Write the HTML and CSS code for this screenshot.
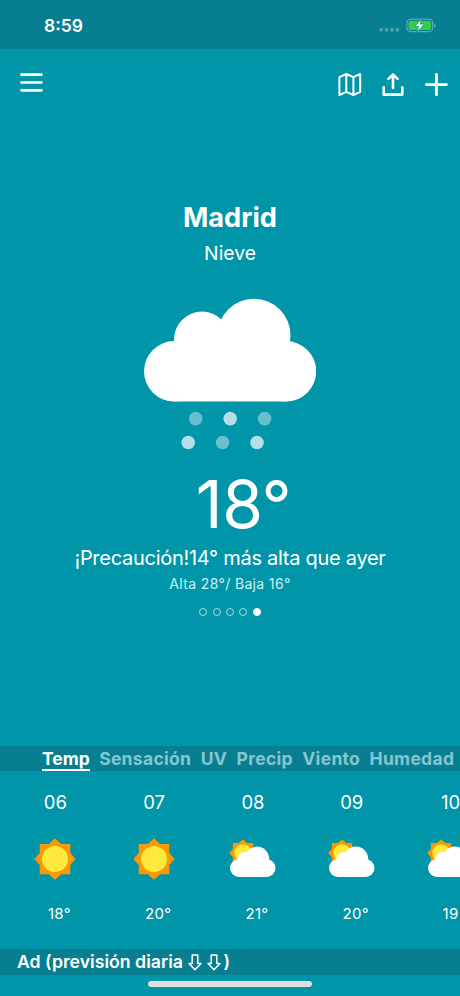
FILE: index.html
```
<!DOCTYPE html>
<html lang="es">
<head>
    <meta charset="UTF-8">
    <meta name="viewport" content="width=device-width, initial-scale=1.0">
    <title>Madrid</title>
    <link rel="stylesheet" href="styles.css">
</head>
<body>
    <svg class="defs" width="0" height="0">
        <symbol id="sun" viewBox="0 0 42 42">
            <path fill="#fc9803" d="M21 .3 27.2 6H36.3V15L41.7 21 36.3 27V36.3H27.2L21 41.7 14.8 36.3H5.7V27L.3 21 5.7 15V6H14.8z"/>
            <circle cx="21" cy="21" r="13" fill="#ffe93b"/>
        </symbol>
        <symbol id="partly" viewBox="0 0 47 39">
            <svg width="28" height="28" viewBox="0 0 42 42"><use href="#sun"/></svg>
            <g fill="#fff">
                <circle cx="10" cy="29" r="9"/>
                <circle cx="37.5" cy="29" r="9"/>
                <circle cx="16" cy="20.5" r="7.5"/>
                <circle cx="28" cy="19.8" r="12.2"/>
                <path d="M9 20H38V38H10z"/>
            </g>
        </symbol>
        <symbol id="down" viewBox="0 0 14 17">
            <path fill="none" stroke="#fff" stroke-width="1.5" stroke-linejoin="round" d="M4.2 1H9.8V9.6H13L7 15.8 1 9.6H4.2z"/>
        </symbol>
    </svg>

    <header class="status">
        <span class="time">8:59</span>
        <svg class="battery" width="58" height="16" viewBox="0 0 58 16">
            <g fill="#4fa3af">
                <rect x="1.5" y="11" width="3.4" height="3.4" rx="1"/>
                <rect x="6.8" y="11" width="3.4" height="3.4" rx="1"/>
                <rect x="12.3" y="11" width="3.4" height="3.4" rx="1"/>
                <rect x="17.7" y="11" width="3.4" height="3.4" rx="1"/>
            </g>
            <rect x="28.8" y="2.1" width="26" height="12.6" rx="4" fill="none" stroke="#6fb3bd"/>
            <rect x="30.5" y="3.7" width="22.6" height="9.4" rx="2.6" fill="#32cb4c"/>
            <path d="M56.2 6.5v4q1.4-.5 1.4-2t-1.4-2z" fill="#6fb3bd"/>
            <path d="M43.6 1.8 36.9 9.4h3.8l-1.6 5.8 7-8.1h-4.1z" fill="#fff" stroke="#16917a" stroke-width=".7"/>
        </svg>
    </header>

    <nav class="toolbar">
        <svg width="23" height="24" viewBox="0 0 23 24" stroke="#fff" stroke-width="2.7" stroke-linecap="round">
            <path d="M1.5 3.7H21.4M1.5 11.5H21.4M1.5 19.3H21.4"/>
        </svg>
        <div class="actions">
            <svg width="24" height="24" viewBox="0 0 24 24" fill="none" stroke="#fff" stroke-width="2" stroke-linejoin="round">
                <path d="M1.4 5.2 8.3 2 15.4 5.2 22.2 2V19.8L15.4 23 8.3 19.8 1.4 23zM8.3 2V19.8M15.4 5.2V23"/>
            </svg>
            <svg width="22" height="24" viewBox="0 0 22 24" fill="none" stroke="#fff" stroke-width="2.6" stroke-linecap="round" stroke-linejoin="round">
                <path d="M1.7 15.4V22.6H20.3V15.4M11 16V2.6M6.4 6.9 11 2.4 15.6 6.9"/>
            </svg>
            <svg width="24" height="24" viewBox="0 0 24 24" stroke="#fff" stroke-width="2.9" stroke-linecap="round">
                <path d="M2.4 12.6H22.4M12.4 2.4V22.6"/>
            </svg>
        </div>
    </nav>

    <main class="current">
        <h1>Madrid</h1>
        <p class="condition">Nieve</p>
        <svg class="cloud" width="172" height="152" viewBox="144 298 172 152">
            <g fill="#fff">
                <circle cx="174.2" cy="371.3" r="30.2"/>
                <circle cx="286" cy="371.3" r="30.2"/>
                <circle cx="202" cy="339.5" r="28"/>
                <circle cx="254" cy="335.3" r="36.5"/>
                <path d="M174 341H286V401.5H174z"/>
            </g>
            <g fill="#66c0cd">
                <circle cx="195.7" cy="418.6" r="6.8"/>
                <circle cx="264.6" cy="418.6" r="6.8"/>
                <circle cx="222.6" cy="442.5" r="6.8"/>
            </g>
            <g fill="#b3e0e6">
                <circle cx="230.2" cy="418.6" r="6.8"/>
                <circle cx="188.2" cy="442.5" r="6.8"/>
                <circle cx="257" cy="442.5" r="6.8"/>
            </g>
        </svg>
        <div class="degrees">18°</div>
        <p class="notice">¡Precaución!14° más alta que ayer</p>
        <p class="range">Alta 28°/ Baja 16°</p>
        <div class="dots"><i></i><i></i><i></i><i></i><i class="on"></i></div>
    </main>

    <div class="tabs">
        <span class="active">Temp</span>
        <span>Sensación</span>
        <span>UV</span>
        <span>Precip</span>
        <span>Viento</span>
        <span>Humedad</span>
    </div>

    <section class="hours">
        <div class="hour">
            <span>06</span>
            <svg width="42" height="42"><use href="#sun"/></svg>
            <span class="temp">18°</span>
        </div>
        <div class="hour">
            <span>07</span>
            <svg width="42" height="42"><use href="#sun"/></svg>
            <span class="temp">20°</span>
        </div>
        <div class="hour">
            <span>08</span>
            <svg width="47" height="39"><use href="#partly"/></svg>
            <span class="temp">21°</span>
        </div>
        <div class="hour">
            <span>09</span>
            <svg width="47" height="39"><use href="#partly"/></svg>
            <span class="temp">20°</span>
        </div>
        <div class="hour">
            <span>10</span>
            <svg width="47" height="39"><use href="#partly"/></svg>
            <span class="temp">19</span>
        </div>
    </section>

    <div class="ad">
        <span>Ad (previsión diaria</span>
        <svg width="14" height="17"><use href="#down"/></svg>
        <svg width="14" height="17"><use href="#down"/></svg>
        <span>)</span>
    </div>
    <div class="home"></div>
</body>
</html>
```

FILE: styles.css
```
* { box-sizing: border-box; margin: 0; padding: 0; }
body { width: 460px; height: 996px; overflow: hidden; display: flex; flex-direction: column; background: #0195a9; color: #fff; font-family: Inter, "Liberation Sans", sans-serif; }
svg { display: block; flex: none; }
.defs { position: absolute; }

.status { height: 49px; flex: none; display: flex; justify-content: space-between; padding: 15px 24px 0 44px; background: #087f90; }
.time { font-size: 17.5px; line-height: 22px; font-weight: 600; }
.battery { margin-top: 2px; }

.toolbar { height: 151px; flex: none; display: flex; justify-content: space-between; align-items: flex-start; padding: 22px 12px 0 20px; }
.actions { display: flex; gap: 20px; padding-top: 1px; }

.current { height: 546px; flex: none; display: flex; flex-direction: column; align-items: center; white-space: nowrap; }
h1 { font-size: 27.2px; line-height: 36px; font-weight: 700; }
.condition { margin-top: 5px; font-size: 19.3px; line-height: 24px; }
.cloud { margin-top: 33px; }
.degrees { margin: 16px 0 0 27px; font-size: 66px; line-height: 76px; font-weight: 400; letter-spacing: -.5px; }
.notice { margin-top: 3px; font-size: 20px; line-height: 26px; letter-spacing: -.28px; }
.range { margin-top: 3px; font-size: 14px; line-height: 20px; letter-spacing: .35px; color: #c9f0f5; }
.dots { display: flex; gap: 5.3px; margin-top: 14px; }
.dots i { width: 8px; height: 8px; border: 1px solid #a5dbe2; border-radius: 50%; }
.dots .on { background: #fff; border-color: #fff; }

.tabs { height: 25px; flex: none; display: flex; gap: 9.4px; padding-left: 42px; background: #087f90; color: #85c6d1; font-size: 17.5px; line-height: 25px; font-weight: 700; letter-spacing: .3px; white-space: nowrap; }
.tabs .active { color: #fff; letter-spacing: 0; border-bottom: 2px solid #fff; }

.hours { height: 178px; flex: none; display: flex; overflow: hidden; padding-left: 6px; }
.hour { width: 98.8px; flex: none; display: flex; flex-direction: column; align-items: center; justify-content: space-between; padding: 19px 0 24px; font-size: 18.5px; line-height: 24px; }
.hour .temp { margin-left: 8px; font-size: 15px; line-height: 22px; letter-spacing: .3px; }
.hour:last-child .temp { margin-left: 0; }

.ad { height: 26px; flex: none; display: flex; align-items: center; gap: 4.5px; padding-left: 17px; background: #087f90; font-size: 17.7px; line-height: 26px; font-weight: 600; white-space: nowrap; }
.ad span:first-child { margin-right: 1px; }
.ad span:last-child { margin-left: -2px; }
.home { width: 164px; height: 6px; flex: none; margin: 6px auto 0; border-radius: 3px; background: #dedede; }
```
